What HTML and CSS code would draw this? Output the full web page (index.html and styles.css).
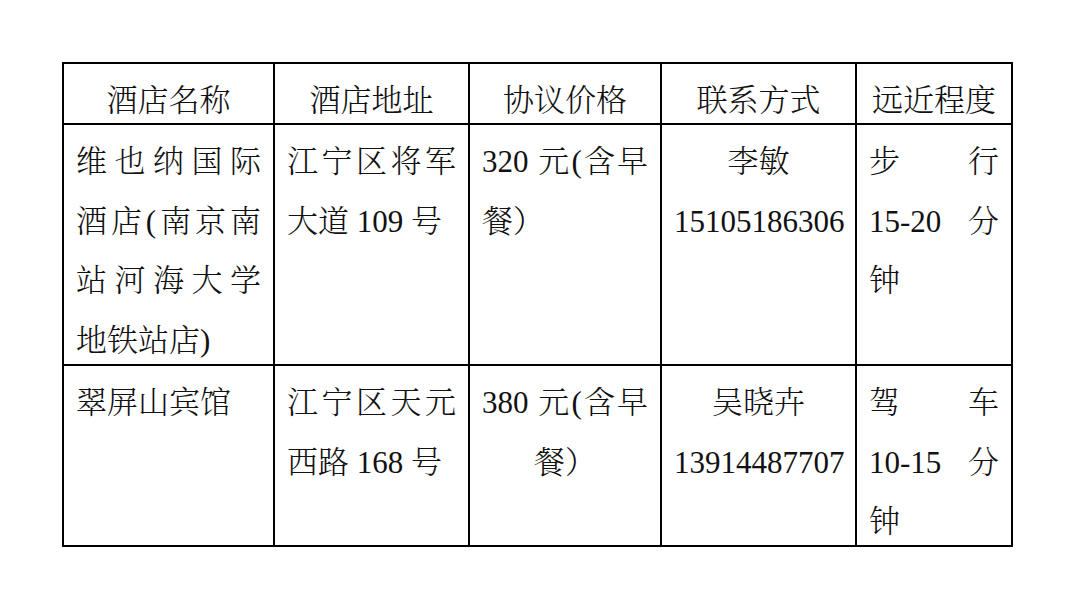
FILE: index.html
```html
<!DOCTYPE html>
<html lang="zh-CN">
<head>
<meta charset="utf-8">
<title>酒店信息</title>
<link rel="stylesheet" href="styles.css">
</head>
<body>
<div class="page">
  <div class="grid" role="table">
    <div class="cell head" role="columnheader">酒店名称</div>
    <div class="cell head" role="columnheader">酒店地址</div>
    <div class="cell head" role="columnheader">协议价格</div>
    <div class="cell head" role="columnheader">联系方式</div>
    <div class="cell head" role="columnheader">远近程度</div>

    <div class="cell" role="cell"><span class="ln j">维也纳国际</span><span class="ln j">酒店(南京南</span><span class="ln j">站河海大学</span><span class="ln">地铁站店)</span></div>
    <div class="cell" role="cell"><span class="ln j">江宁区将军</span><span class="ln">大道 109 号</span></div>
    <div class="cell" role="cell"><span class="ln j">320 元(含早</span><span class="ln">餐）</span></div>
    <div class="cell center" role="cell"><span class="ln">李敏</span><span class="ln">15105186306</span></div>
    <div class="cell" role="cell"><span class="ln j">步行</span><span class="ln j">15-20 分</span><span class="ln">钟</span></div>

    <div class="cell" role="cell"><span class="ln">翠屏山宾馆</span></div>
    <div class="cell" role="cell"><span class="ln j">江宁区天元</span><span class="ln">西路 168 号</span></div>
    <div class="cell center" role="cell"><span class="ln j">380 元(含早</span><span class="ln">餐）</span></div>
    <div class="cell center" role="cell"><span class="ln">吴晓卉</span><span class="ln">13914487707</span></div>
    <div class="cell" role="cell"><span class="ln j">驾车</span><span class="ln j">10-15 分</span><span class="ln">钟</span></div>
  </div>
</div>
</body>
</html>
```

FILE: styles.css
```css
html, body {
  margin: 0;
  padding: 0;
  background: #ffffff;
}

.page {
  padding: 62px 0 0 62px;
}

.grid {
  display: grid;
  grid-template-columns: 211px 195px 192px 195px 156px;
  grid-template-rows: 61px 241px 181px;
  width: max-content;
  border-top: 2px solid #000;
  border-left: 2px solid #000;
  font-family: "Liberation Serif", "Noto Serif CJK SC", "Noto Sans CJK SC", serif;
  font-size: 31px;
  font-weight: 300;
  line-height: 59.7px;
  color: #111;
}

.cell {
  box-sizing: border-box;
  border-right: 2px solid #000;
  border-bottom: 2px solid #000;
  padding: 7px 12px 0 12px;
  overflow: visible;
  white-space: nowrap;
}

.head {
  text-align: center;
}

.center {
  text-align: center;
}

.ln {
  display: block;
}

.j {
  text-align: justify;
  text-align-last: justify;
}
```
